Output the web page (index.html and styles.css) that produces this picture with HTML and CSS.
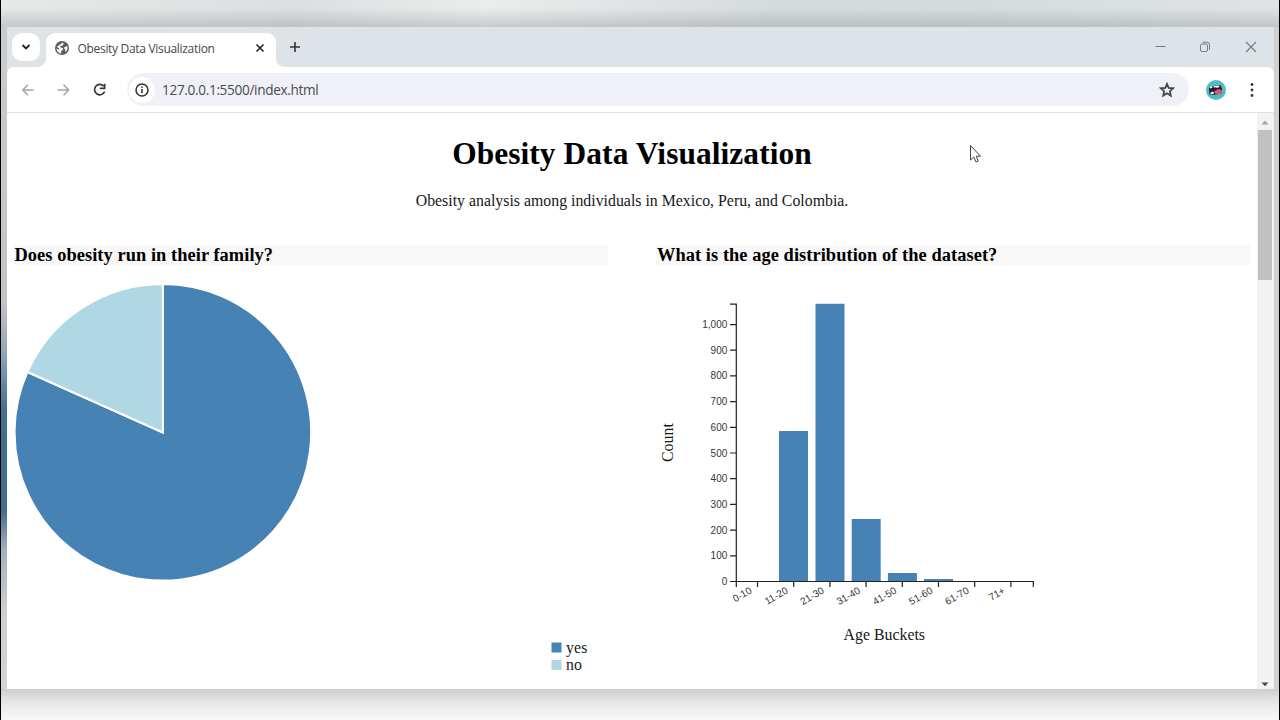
FILE: index.html
```
<!DOCTYPE html>
<html lang="en">
<head>
<meta charset="utf-8">
<title>Obesity Data Visualization</title>
<link rel="stylesheet" href="styles.css">
</head>
<body>
<div class="desktop">
<div class="window">
  <header class="tabstrip">
    <div class="tab-search"><svg width="10" height="8" viewBox="0 0 10 8"><path d="M1.5 2 5 5.5 8.500 2" fill="none" stroke="#222" stroke-width="1.8"/></svg></div>
    <div class="tab">
      <svg class="globe" width="14" height="14" viewBox="0 0 14 14"><circle cx="7" cy="7" r="7" fill="#5a5d61"/><path d="M7.800 1.500 8.800 3 7.300 4.700H5.600L5 6.300 7.800 7v2L6 10.300v2.400C3.500 12 1.700 10 1.400 7.400L3.500 8.800l1-.6L2 5.800ZM10 5.800l2.400-.5c.5 2.400-.2 4.500-1.800 5.900L10.200 8.500 8.800 7Z" fill="#fff"/></svg>
      <span class="tab-title">Obesity Data Visualization</span>
      <svg class="tab-close" width="10" height="10" viewBox="0 0 10 10"><path d="m1.500 1.500 7 7m0-7-7 7" stroke="#222" stroke-width="1.600"/></svg>
    </div>
    <svg class="new-tab" width="12" height="12" viewBox="0 0 12 12"><path d="M6 1v10M1 6h10" stroke="#333" stroke-width="1.600"/></svg>
    <svg class="controls" width="102" height="14" viewBox="0 0 102 14" fill="none" stroke="#777c80"><path d="M.5 6.500h10"/><rect x="45.500" y="4" width="7" height="7.500" rx="1.500"/><path d="M47.500 2.200h4.500q2.500 0 2.500 2.500v5"/><path d="m91 2 10 10m0-10L91 12" stroke-width="1.200"/></svg>
  </header>
  <nav class="toolbar">
    <svg class="nav-icons" width="90" height="16" viewBox="0 0 90 16" fill="none"><path d="M13.500 8H3M8 2.800 2.800 8 8 13.200M37.500 8H48.500M43.500 2.800 48.700 8l-5.200 5.200" stroke="#a2a5a8" stroke-width="1.500"/><path d="M83.700 4.200A5.200 5.200 0 1 0 84.600 9.500" stroke="#333639" stroke-width="1.700"/><path d="M85.500 1.700v5.600h-5.700V5.600h4V1.700Z" fill="#333639"/></svg>
    <div class="address">
      <div class="info"><svg width="14" height="14" viewBox="0 0 14 14"><circle cx="7" cy="7" r="6" fill="none" stroke="#303236" stroke-width="1.500"/><path d="M7 6v4.300M7 3.400v1.500" stroke="#303236" stroke-width="1.500"/></svg></div>
      <span class="url">127.0.0.1:5500/index.html</span>
      <svg class="star" width="16" height="16" viewBox="0 0 16 16"><path d="m8 1.900 1.700 4 4.500.4-3.400 3 1 4.400L8 11.300l-3.800 2.400 1-4.400-3.400-3 4.500-.4Z" fill="none" stroke="#404347" stroke-width="1.700"/></svg>
    </div>
    <svg class="avatar" width="20" height="20" viewBox="0 0 20 20"><circle cx="10" cy="10" r="10" fill="#4fbcc7"/><path d="m3 7.500 5-1.500 6.500-1 1.500 4-.5 4.500-6.500 1.300-5.500-.6Z" fill="#211d2b"/><path d="m3.500 7 2.500-.8.500 1.600-2 .8ZM7.500 6.200l6-.7-.5 1.800-2 .4-1.500-.5-1.500.5Z" fill="#fff"/><path d="m4.500 12.500 2-1 1.500 1-.5 1.500H4.500Z" fill="#e5eef2"/><path d="m8 11.500 4-2.500 3.500 1 1 3.500-3 1-4.500-.7Z" fill="#d75b70"/></svg>
    <svg class="dots" width="4" height="16" viewBox="0 0 4 16" fill="#35383c"><circle cx="2" cy="2.500" r="1.400"/><circle cx="2" cy="8" r="1.400"/><circle cx="2" cy="13.500" r="1.400"/></svg>
  </nav>
  <div class="viewport">
    <main class="page">
      <h1>Obesity Data Visualization</h1>
      <p class="intro">Obesity analysis among individuals in Mexico, Peru, and Colombia.</p>
      <div class="panels">
        <section>
          <h3 class="q-family">Does obesity run in their family?</h3>
          <svg class="chart" width="594" height="424" viewBox="14 265 594 424">
            <g stroke="#fff" stroke-width="2"><path d="M162.800 432.500V284A148.300 148.300 0 1 1 27.400 372Z" fill="#4682b4"/><path d="M162.800 432.500 27.400 372A148.300 148.300 0 0 1 162.800 284Z" fill="#b0d8e4"/></g>
            <rect x="551.500" y="642.500" width="10" height="10" fill="#4682b4"/>
            <rect x="551.500" y="660" width="10" height="10" fill="#b3d6e3"/>
            <text class="label" x="566" y="652.500" textLength="21.500">yes</text>
            <text class="label" x="566" y="670" textLength="16">no</text>
          </svg>
        </section>
        <section>
          <h3 class="q-age">What is the age distribution of the dataset?</h3>
          <svg class="chart" width="594" height="424" viewBox="656 265 594 424">
            <g fill="#4682b4"><path d="M779 431h29v150.500h-29ZM815.500 303.800h29v277.700h-29ZM851.700 519h29v62.500h-29ZM887.900 573h29v8.500h-29ZM924.100 579h29v2.500h-29ZM960.300 581h29v.5h-29Z"/></g>
            <g fill="none" stroke="#222" stroke-width="1.200"><path d="M730 304.200h6.300v277.300H730M730 555.800h6M730 530.100h6M730 504.400h6M730 478.700h6M730 453h6M730 427.300h6M730 401.600h6M730 375.900h6M730 350.200h6M730 324.700h6"/><path d="M736.300 587v-5.500h297v5.500M757.500 581.500v5.500M793.700 581.500v5.500M829.900 581.500v5.500M866.100 581.500v5.500M902.300 581.500v5.500M938.500 581.500v5.500M974.700 581.500v5.500M1010.900 581.500v5.500"/></g>
            <g class="tick">
              <text x="727.300" y="585">0</text><text x="727.300" y="559.300">100</text><text x="727.300" y="533.600">200</text><text x="727.300" y="507.900">300</text><text x="727.300" y="482.200">400</text><text x="727.300" y="456.500">500</text><text x="727.300" y="430.800">600</text><text x="727.300" y="405.100">700</text><text x="727.300" y="379.400">800</text><text x="727.300" y="353.700">900</text><text x="727.300" y="328.200">1,000</text>
              <text transform="translate(752.500 592.500) rotate(-30)">0-10</text><text transform="translate(788.700 592.500) rotate(-30)">11-20</text><text transform="translate(824.900 592.500) rotate(-30)">21-30</text><text transform="translate(861.100 592.500) rotate(-30)">31-40</text><text transform="translate(897.300 592.500) rotate(-30)">41-50</text><text transform="translate(933.500 592.500) rotate(-30)">51-60</text><text transform="translate(969.700 592.500) rotate(-30)">61-70</text><text transform="translate(1005.900 592.500) rotate(-30)">71+</text>
            </g>
            <text class="label" x="843.500" y="640.400" textLength="81.500">Age Buckets</text>
            <text class="label" transform="translate(672.500 462) rotate(-90)" textLength="39">Count</text>
          </svg>
        </section>
      </div>
    </main>
    <div class="scrollbar">
      <svg class="arrow" width="8" height="5" viewBox="0 0 8 5"><path d="M.5 4.500 4 .8l3.500 3.700Z" fill="#a0a0a0"/></svg>
      <div class="thumb"></div>
      <svg class="arrow arrow-down" width="8" height="5" viewBox="0 0 8 5"><path d="M.5.500 4 4.300 7.500.500Z" fill="#484848"/></svg>
    </div>
  </div>
</div>
<svg class="pointer" width="14" height="20" viewBox="0 0 14 20"><path d="M1.500 1.500v14.500l3.200-3 2.300 5 2.300-1-2.200-4.800h4.400Z" fill="#fff" stroke="#444"/></svg>
</div>
</body>
</html>
```
FILE: styles.css
```
* { box-sizing: border-box; }
body { margin: 0; overflow: hidden; }
svg { display: block; flex: none; }
.desktop {
  position: relative;
  width: 1280px;
  height: 720px;
  padding: 27px 6px 31px;
  border-left: 1px solid #000;
  border-right: 1px solid #000;
  background:
    linear-gradient(to bottom, transparent 8px, rgba(120,125,128,.3) 27px, transparent 27px) 0 0 / 100% 27px no-repeat,
    linear-gradient(to right, #e7e8e8, #dcdfe0 23%, #ebecec 38%, #d6dbdd 60%, #d5dbdd 75%, #dfe3e5) 0 0 / 100% 27px no-repeat,
    linear-gradient(to bottom, #cdcdcd, #e5e5e5 12px, #f7f7f7 31px) 0 100% / 100% 31px no-repeat,
    linear-gradient(to bottom, #ccc 0, #c7c3c5 300px, #91a9bd 350px, #466e91 410px, #426b90 510px, #a1b1c0 550px, #d0cccf 610px, #d8d8d8 100%) 0 0 / 6px 100% no-repeat,
    #cfd1d1;
}
.window { display: flex; flex-direction: column; width: 1267px; height: 662px; background: #dde3e6; overflow: hidden; }
.tabstrip { display: flex; height: 40px; padding-left: 5px; background: #dde3e6; }
.tab-search { display: flex; align-items: center; justify-content: center; width: 28px; height: 28px; margin-top: 6px; border-radius: 10px; background: #fff; }
.tab { position: relative; display: flex; align-items: center; width: 230px; height: 34px; margin: 6px 0 0 6px; padding: 0 11px 5px 9px; border-radius: 9px 9px 0 0; background: #fff; }
.tab::before, .tab::after { content: ""; position: absolute; bottom: 0; width: 8px; height: 8px; }
.tab::before { left: -8px; background: radial-gradient(circle at 0 0, transparent 7.5px, #fff 8px); }
.tab::after { right: -8px; background: radial-gradient(circle at 100% 0, transparent 7.5px, #fff 8px); }
.tab-title { margin: 1px 0 0 8.5px; color: #45484b; font: 12px "Open Sans", sans-serif; letter-spacing: -.31px; white-space: nowrap; }
.tab-close { margin-left: auto; }
.new-tab { margin: 14px 0 0 13px; }
.controls { margin: 13px 17px 0 auto; }
.toolbar { display: flex; align-items: center; height: 46px; padding-left: 13px; border-bottom: 1px solid #e0e1e1; border-radius: 7px 7px 0 0; background: #fff; }
.nav-icons { margin-right: 17px; }
.address { display: flex; align-items: center; width: 1062px; height: 33px; padding: 0 14px 0 2px; border-radius: 17px; background: #f0f1f8; }
.info { display: flex; align-items: center; justify-content: center; width: 26px; height: 26px; border-radius: 50%; background: #fff; }
.url { margin-left: 7px; color: #494c50; font: 13.6px "Open Sans", sans-serif; letter-spacing: -.33px; white-space: nowrap; }
.star { margin-left: auto; }
.avatar { margin-left: 17px; }
.dots { margin-left: 24px; }
.viewport { display: flex; height: 576px; background: #fff; }
.page { width: 1250px; padding: 0 7px; color: #000; font-family: "Liberation Serif", "Times New Roman", serif; }
h1 { margin: 21px 0 0; height: 40px; line-height: 40px; font-size: 31.4px; letter-spacing: .08px; text-align: center; white-space: nowrap; }
.intro { margin: 17px 0 0; height: 20px; line-height: 20px; color: #171717; font-size: 15.8px; letter-spacing: .02px; text-align: center; }
.panels { display: grid; grid-template-columns: 594px 594px; column-gap: 48px; margin-top: 34px; }
h3 { height: 20px; margin: 0; line-height: 20px; background: #f9f7f8; font-size: 18.4px; letter-spacing: .06px; white-space: nowrap; }
.q-family { padding-left: .5px; }
.q-age { padding-left: 1px; }
.label { fill: #171717; font-family: "Liberation Serif", "Times New Roman", serif; font-size: 15.8px; }
.tick { fill: #363636; font-family: "Liberation Sans", Arial, sans-serif; font-size: 10px; text-anchor: end; }
.scrollbar { display: flex; flex-direction: column; align-items: center; width: 17px; padding: 7px 2px 2px 1px; background: #f1f2f2; }
.thumb { width: 14px; height: 150px; margin-top: 5px; background: #c1c1c1; }
.arrow-down { margin-top: auto; }
.pointer { position: absolute; left: 968px; top: 144px; }
```
